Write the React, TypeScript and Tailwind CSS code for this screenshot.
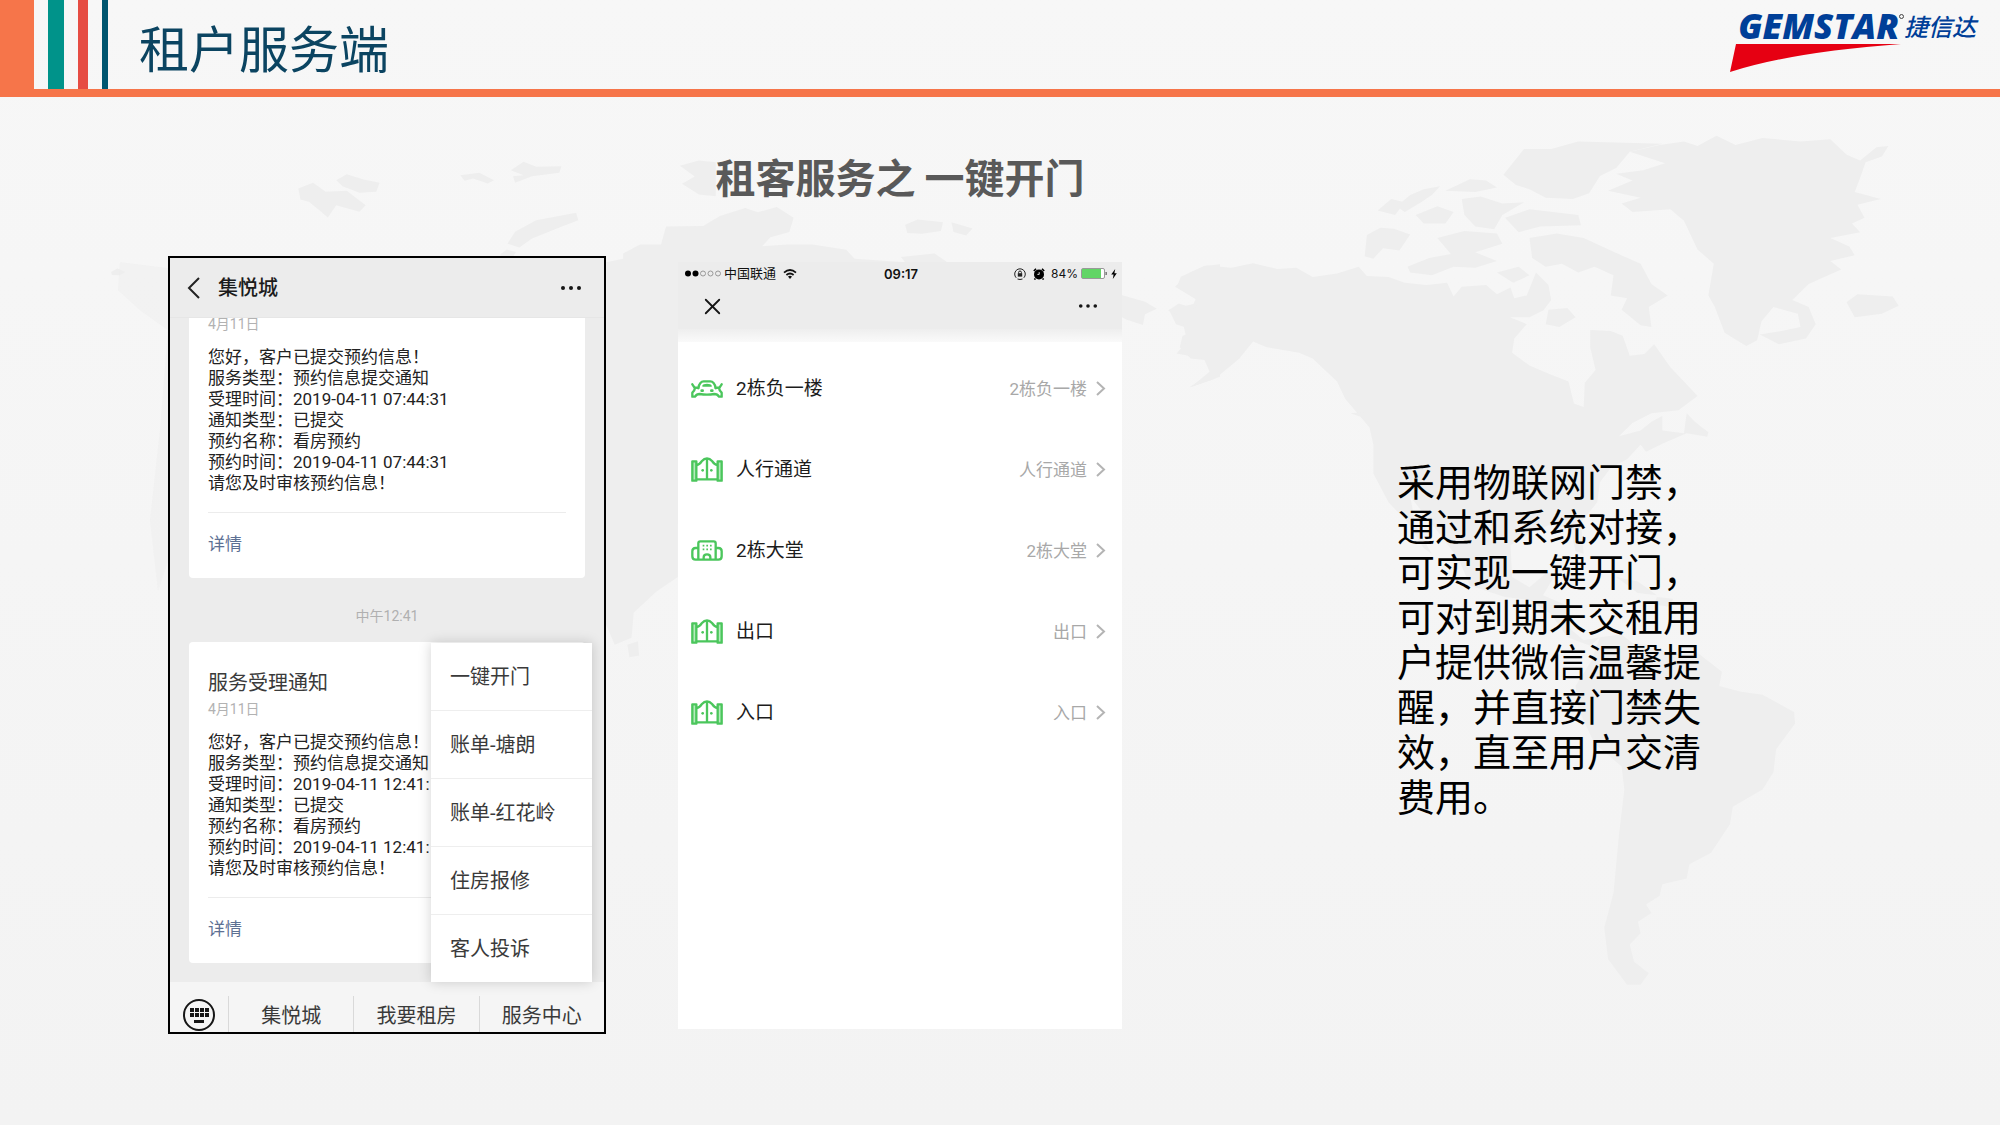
import React from "react";
import { X } from "lucide-react";

type IconName = "car" | "gate" | "building";

const messageLines = (time: string) => [
  "您好，客户已提交预约信息！",
  "服务类型：预约信息提交通知",
  `受理时间：2019-04-11 ${time}`,
  "通知类型：已提交",
  "预约名称：看房预约",
  `预约时间：2019-04-11 ${time}`,
  "请您及时审核预约信息！",
];

const menuItems = ["一键开门", "账单-塘朗", "账单-红花岭", "住房报修", "客人投诉"];
const tabs = ["集悦城", "我要租房", "服务中心"];

const doors: { name: string; icon: IconName }[] = [
  { name: "2栋负一楼", icon: "car" },
  { name: "人行通道", icon: "gate" },
  { name: "2栋大堂", icon: "building" },
  { name: "出口", icon: "gate" },
  { name: "入口", icon: "gate" },
];

function WorldMap() {
  return (
    <svg
      className="pointer-events-none absolute inset-0 h-full w-full"
      viewBox="0 0 2000 1125"
      preserveAspectRatio="none"
      fill="#eeeeee"
      aria-hidden="true"
    >
      {/* Americas and Greenland */}
      <g transform="translate(1150 100) scale(0.5421 0.574)">
        <path d="M46 325 L75 300 L105 288 L150 292 L190 284 L235 294 L270 292 L300 308 L345 302 L385 290 L400 306 L440 308 L470 318 L510 322 L548 318 L560 342 L575 325 L620 322 L640 338 L665 326 L672 345 L695 340 L712 300 L735 322 L740 348 L726 366 L700 378 L664 378 L695 390 L672 415 L668 440 L700 462 L740 478 L772 490 L782 528 L800 534 L802 492 L822 470 L812 430 L812 400 L850 402 L872 410 L885 445 L912 442 L930 425 L960 465 L985 490 L1010 515 L975 540 L925 545 L890 562 L865 585 L905 575 L925 560 L945 550 L945 575 L985 580 L990 545 L1005 560 L1030 578 L1028 586 L990 580 L950 596 L915 612 L905 600 L880 625 L850 640 L830 665 L825 700 L795 735 L800 790 L785 785 L775 745 L735 740 L700 755 L665 775 L668 830 L700 848 L735 820 L745 830 L725 862 L770 880 L775 920 L800 940 L830 935 L812 950 L770 935 L740 895 L700 870 L655 865 L590 845 L570 800 L530 750 L480 690 L490 740 L520 790 L505 780 L475 735 L440 700 L412 650 L412 600 L405 570 L360 520 L345 490 L300 450 L275 440 L215 430 L190 420 L165 450 L120 485 L75 500 L120 465 L130 455 L75 450 L55 430 L60 410 L85 402 L48 390 L35 365 L80 355 L85 345 Z" />
        <path d="M370 545 L400 555 L428 578 L420 560 L395 543 Z M860 830 L900 838 L935 862 L900 858 Z M935 865 L965 868 L958 882 L930 878 Z" />
        <path d="M830 935 L870 930 L890 945 L930 950 L960 965 L1010 962 L1055 995 L1050 1020 L1090 1030 L1130 1035 L1188 1065 L1190 1085 L1155 1130 L1150 1170 L1130 1200 L1075 1230 L1070 1260 L1035 1310 L995 1330 L990 1355 L945 1365 L940 1385 L915 1400 L925 1415 L900 1430 L905 1450 L885 1470 L893 1500 L920 1520 L905 1540 L880 1540 L845 1495 L838 1440 L855 1380 L865 1280 L875 1200 L870 1160 L820 1120 L790 1060 L785 1020 L815 975 Z" />
        {/* Arctic archipelago */}
        <path d="M455 185 L480 165 L505 155 L535 150 L520 165 L500 178 L470 195 Z M545 158 L590 138 L620 140 L640 152 L600 160 Z M420 192 L445 172 L470 178 L452 200 Z M400 235 L425 222 L450 224 L480 234 L460 262 L430 258 L412 276 L396 272 Z M490 200 L530 185 L560 195 L545 215 L505 215 Z M575 172 L610 168 L650 180 L690 178 L650 200 L635 225 L600 220 L580 200 Z M530 240 L580 228 L640 232 L650 250 L600 265 L640 280 L600 292 L560 290 L520 305 L480 300 L475 290 L515 275 L555 268 Z M655 205 L700 190 L790 200 L795 218 L720 220 L680 230 Z M652 130 L690 85 L740 85 L790 72 L945 76 L885 90 L860 118 L830 132 L810 162 L780 172 L730 170 L700 155 L675 148 Z M700 240 L750 232 L800 240 L850 262 L905 285 L925 320 L955 340 L920 360 L925 395 L905 392 L870 365 L880 345 L850 340 L855 305 L820 290 L790 300 L760 285 L730 290 L705 275 Z M640 300 L680 290 L700 305 L670 318 Z M735 365 L770 362 L785 378 L755 395 L730 390 Z" />
        <path d="M885 90 L940 78 L985 72 L1010 80 L1045 62 L1080 78 L1130 66 L1200 72 L1255 68 L1285 95 L1310 105 L1340 82 L1362 80 L1350 98 L1320 108 L1310 135 L1300 160 L1348 172 L1305 182 L1318 205 L1295 215 L1310 230 L1255 240 L1290 255 L1300 270 L1255 280 L1275 295 L1215 320 L1185 348 L1215 360 L1228 390 L1210 415 L1160 425 L1125 408 L1165 402 L1200 395 L1195 372 L1150 360 L1128 385 L1120 418 L1100 428 L1060 405 L1042 360 L1030 340 L1040 285 L1010 260 L985 210 L960 190 L890 195 L870 180 L905 170 L845 158 L890 140 L860 128 L910 122 L950 110 Z" />
        <path d="M1285 352 L1305 338 L1370 342 L1381 358 L1350 372 L1300 378 Z" />
      </g>
      {/* Islands over the north-west */}
      <g transform="translate(90 160) scale(0.4209 0.3333)">
        <path d="M495 85 L530 68 L560 95 L610 92 L655 135 L640 155 L585 135 L565 172 L545 150 L520 125 L500 118 Z M585 60 L610 42 L650 58 L688 68 L680 95 L640 98 L600 78 Z M880 45 L925 38 L960 60 L945 70 L910 55 L890 62 Z M1000 30 L1030 5 L1060 20 L1120 18 L1115 38 L1050 48 L1010 68 L1005 48 L1030 45 Z M1155 158 L1160 180 L1120 200 L1050 235 L1020 262 L992 250 L1010 215 L1060 180 Z M50 335 L65 325 L84 335 L70 345 L52 344 Z M975 282 L990 268 L1012 275 L1005 290 L975 290 Z" />
      </g>
      {/* Northern Eurasia around the device screens */}
      <g transform="translate(560 130) scale(0.4209 0.3571)">
        <path d="M110 370 L150 360 L150 345 L190 320 L240 320 L252 270 L340 268 L380 240 L440 218 L470 230 L515 215 L555 245 L545 285 L500 300 L480 325 L540 320 L600 320 L680 335 L700 360 L820 370 L810 355 L890 345 L920 370 L920 420 L1330 460 L1390 480 L1418 500 L1390 515 L1385 545 L1345 530 L1330 520 L1335 1100 L280 1100 L280 1250 L230 1290 L175 1350 L170 1420 L130 1440 L108 1380 Z" />
        <path d="M820 265 L850 250 L910 258 L905 282 L860 290 L825 288 Z M930 258 L980 275 L965 295 L935 285 Z M285 100 L330 85 L370 90 L370 185 L330 180 L290 150 L320 130 Z M160 1440 L185 1430 L188 1470 L165 1475 Z M1445 505 L1470 485 L1510 500 L1480 522 Z M1568 375 L1530 380 L1475 410 L1465 440 L1520 480 L1480 540 L1490 590 L1465 625 L1530 640 L1545 680 L1495 720 L1568 690 Z" />
      </g>
      {/* Coast left of the first screen */}
      <path d="M120 262 L168 268 L168 560 L158 590 L150 520 L160 430 L168 330 L140 310 L118 290 Z" opacity="0.5" />
    </svg>
  );
}

function Logo() {
  return (
    <div className="mr-6 mt-2 flex flex-col" role="img" aria-label="GEMSTAR 捷信达">
      <div className="flex h-9 items-center pl-2 text-[#003f98]">
        <span className="font-['Open_Sans','Liberation_Sans',sans-serif] text-[35px] font-extrabold italic leading-9">
          GEMSTAR
        </span>
        <span className="mb-5 h-[5px] w-[5px] rounded-full border border-[#444]" />
        <span className="font-['Noto_Sans_CJK_SC',sans-serif] text-[24px] font-medium italic leading-9">捷信达</span>
      </div>
      <svg className="h-[29px] w-[172px]" viewBox="0 0 172 29" aria-hidden="true">
        <path d="M6 0 L171 0 Q62 8 0 28 Z" fill="#e60012" />
      </svg>
    </div>
  );
}

function PageHeader() {
  return (
    <header className="relative flex h-[97px] border-b-8 border-[#f6754a]">
      <div className="flex" aria-hidden="true">
        <div className="w-[34px] bg-[#f6754a]" />
        <div className="ml-[14px] w-4 bg-[#00938a]" />
        <div className="ml-[14px] w-[10px] bg-[#e64c43]" />
        <div className="ml-[14px] w-[6px] bg-[#005670]" />
      </div>
      <h1 className="ml-[31px] flex-1 pt-[14px] text-[50px] leading-[64px] text-[#0b4461]">租户服务端</h1>
      <Logo />
    </header>
  );
}

function Dots({ className }: { className: string }) {
  return (
    <svg className={className} viewBox="0 0 22 6" fill="#161616" aria-hidden="true">
      <circle cx="3" cy="3" r="2" />
      <circle cx="11" cy="3" r="2" />
      <circle cx="19" cy="3" r="2" />
    </svg>
  );
}

function MessageBody({ time }: { time: string }) {
  return (
    <>
      <div className="mt-[17px] text-[17px] leading-[21px] text-[#222]">
        {messageLines(time).map((line) => (
          <p key={line} className="whitespace-nowrap">
            {line}
          </p>
        ))}
      </div>
      <div className="mt-[18px] border-t border-[#ececec] pb-6 pt-[21px]">
        <a href="#detail" className="block text-[17px] leading-5 text-[#5d7093]">
          详情
        </a>
      </div>
    </>
  );
}

function KeyboardIcon() {
  return (
    <svg className="h-[34px] w-[34px]" viewBox="0 0 34 34" fill="#161616" aria-hidden="true">
      <circle cx="17" cy="17" r="15" fill="none" stroke="#161616" strokeWidth="2" />
      {[8, 13, 18, 23].map((x) => (
        <g key={x}>
          <rect x={x} y="10" width="4" height="4" />
          <rect x={x} y="15" width="4" height="4" />
        </g>
      ))}
      <rect x="12" y="22" width="10" height="3" />
    </svg>
  );
}

function ChatScreen() {
  return (
    <section className="relative col-start-2 row-start-2 border-2 border-black bg-[#ececec] font-[Roboto,'Noto_Sans_CJK_SC',sans-serif]">
      <header className="flex h-[60px] items-center border-b border-[#e6e6e6] pl-[17px] pr-[22px]">
        <button type="button" aria-label="返回">
          <svg className="h-[22px] w-[13px]" viewBox="0 0 13 22" fill="none" stroke="#222" strokeWidth="2" aria-hidden="true">
            <path d="M12 1 L2 11 L12 21" />
          </svg>
        </button>
        <h3 className="ml-[18px] flex-1 pt-px text-[20px] font-medium leading-6 text-[#1c1c1c]">集悦城</h3>
        <button type="button" aria-label="更多">
          <Dots className="h-[6px] w-[22px]" />
        </button>
      </header>

      <div className="px-[19px] pb-[19px]">
        <article className="rounded-b-[4px] bg-white px-[19px]">
          <p className="text-[14px] leading-3 text-[#b2b2b2]">4月11日</p>
          <MessageBody time="07:44:31" />
        </article>
        <p className="flex h-16 items-center justify-center pt-3 text-[14px] text-[#b0b0b0]">中午12:41</p>
        <article className="overflow-hidden rounded-[4px] bg-white px-[19px] pt-[29px]">
          <h4 className="text-[20px] leading-6 text-[#3a3a3a]">服务受理通知</h4>
          <p className="mt-2 text-[14px] leading-3 text-[#b2b2b2]">4月11日</p>
          <MessageBody time="12:41:" />
        </article>
      </div>

      <nav className="relative flex h-[50px] bg-[#f5f5f5] text-[20px] text-[#3a3a3a]">
        <button type="button" aria-label="键盘" className="flex w-[58px] justify-center pt-4">
          <KeyboardIcon />
        </button>
        {tabs.map((tab) => (
          <button key={tab} type="button" className="mt-[14px] flex flex-1 items-center justify-center border-l border-[#d9d9d9] pt-1">
            {tab}
          </button>
        ))}
        <ul className="absolute bottom-full right-3 w-[161px] divide-y divide-[#eeeeee] bg-white shadow-[0_0_12px_rgba(0,0,0,0.18)]">
          {menuItems.map((item) => (
            <li key={item}>
              <button type="button" className="flex h-[67px] w-full items-center pl-[19px] pt-px text-left">
                {item}
              </button>
            </li>
          ))}
        </ul>
      </nav>
    </section>
  );
}

function DoorIcon({ name }: { name: IconName }) {
  if (name === "car") {
    return (
      <svg className="h-[18px] w-8" viewBox="0 0 96 54" fill="none" stroke="#4bc65c" strokeWidth="7" strokeLinejoin="round" strokeLinecap="round" aria-hidden="true">
        <path d="M22 24 Q26 4 38 4 H58 Q70 4 74 24" />
        <path d="M36 18 Q38 14 48 14 Q58 14 60 18 Z" strokeWidth="5" />
        <path d="M4 13 L10 22 L22 24 M74 24 L86 22 L92 13" />
        <path d="M12 24 Q11 32 4 38 V50 H12 Q17 42 26 42 Q48 46 70 42 Q79 42 84 50 H92 V38 Q85 32 84 24" />
        <path d="M32 32 H35 M61 32 H64" strokeWidth="8" />
      </svg>
    );
  }
  if (name === "gate") {
    return (
      <svg className="h-[25px] w-8" viewBox="0 0 96 75" fill="none" stroke="#4bc65c" strokeWidth="7" strokeLinejoin="round" aria-hidden="true">
        <path d="M4 13 H16 V71 H4 Z M80 13 H92 V71 H80 Z" fill="#b5eabc" />
        <path d="M16 24 Q27 22 32 13 Q40 4 48 4 Q56 4 64 13 Q69 22 80 24" />
        <path d="M48 4 V67 M16 67 H80" />
        <circle cx="35" cy="40" r="4" fill="#4bc65c" stroke="none" />
        <circle cx="61" cy="40" r="4" fill="#4bc65c" stroke="none" />
      </svg>
    );
  }
  return (
    <svg className="h-[21px] w-8" viewBox="0 0 96 63" fill="none" stroke="#4bc65c" strokeWidth="7" strokeLinejoin="round" aria-hidden="true">
      <path d="M22 58 V10 Q22 4 28 4 H68 Q74 4 74 10 V58" />
      <path d="M22 24 H14 Q4 24 4 34 V49 Q4 59 14 59 H82 Q92 59 92 49 V34 Q92 24 82 24 H74" />
      <path d="M38 58 V52 Q38 43 48 43 Q58 43 58 52 V58" />
      <path d="M35 17 H40 M46 17 H51 M57 17 H62 M35 28 H40 M46 28 H51 M57 28 H62" strokeWidth="5" />
    </svg>
  );
}

function StatusBar() {
  return (
    <div className="grid h-[23px] grid-cols-3 items-center pl-[7px] pr-[5px] text-[13px] leading-4 text-[#111]">
      <div className="flex items-center">
        <svg className="h-[7px] w-9" viewBox="0 0 36 7" fill="none" stroke="#999" aria-hidden="true">
          <circle cx="3" cy="3.5" r="3" fill="#000" stroke="none" />
          <circle cx="10.5" cy="3.5" r="3" fill="#000" stroke="none" />
          <circle cx="18" cy="3.5" r="2.5" />
          <circle cx="25.5" cy="3.5" r="2.5" />
          <circle cx="33" cy="3.5" r="2.5" />
        </svg>
        <span className="ml-[3px]">中国联通</span>
        <svg className="ml-[7px] h-[10px] w-[14px]" viewBox="0 0 14 10" fill="none" stroke="#111" strokeWidth="1.8" aria-hidden="true">
          <path d="M1 3.6 Q7 -1.6 13 3.6" />
          <path d="M3.4 6 Q7 3 10.6 6" />
          <path d="M5 7.6 Q7 6 9 7.6 L7 10 Z" fill="#111" stroke="none" />
        </svg>
      </div>
      <span className="text-center font-[Inter,sans-serif] font-semibold">09:17</span>
      <div className="flex items-center justify-end">
        <svg className="h-3 w-3" viewBox="0 0 12 12" fill="none" stroke="#222" aria-hidden="true">
          <path d="M2.2 9.8 A5.3 5.3 0 1 1 9.8 9.8 M3.5 11 Q6 12 8.5 11" />
          <path d="M4.6 5.5 V4.4 Q4.6 3 6 3 Q7.4 3 7.4 4.4 V5.5" />
          <rect x="3.8" y="5.2" width="4.4" height="3.4" fill="#222" stroke="none" />
        </svg>
        <svg className="ml-[7px] h-3 w-3" viewBox="0 0 12 12" aria-hidden="true">
          <circle cx="6" cy="6.4" r="5" fill="#000" />
          <path d="M0.8 3 L3 0.8 M11.2 3 L9 0.8 M2.4 10.4 L1.4 11.6 M9.6 10.4 L10.6 11.6" stroke="#000" strokeWidth="1.6" />
          <path d="M6.2 4.2 V6.4 H4.4" stroke="#ddd" fill="none" />
        </svg>
        <span className="ml-[6px] font-[Inter,sans-serif] text-[12px]">84%</span>
        <svg className="ml-[3px] h-[11px] w-[26px]" viewBox="0 0 26 11" aria-hidden="true">
          <rect x="0.5" y="0.5" width="23" height="10" rx="1.5" fill="#fff" stroke="#999" />
          <rect x="1" y="1" width="19" height="9" fill="#62d566" />
          <path d="M25 4 Q26.4 5.5 25 7 Z" fill="#777" stroke="#777" />
        </svg>
        <svg className="ml-1 h-[10px] w-[6px]" viewBox="0 0 6 10" fill="#000" aria-hidden="true">
          <path d="M4.2 0 L0.2 5.6 H2.6 L1.8 10 L5.8 4.2 H3.4 Z" />
        </svg>
      </div>
    </div>
  );
}

function DoorScreen() {
  return (
    <section className="col-start-4 row-start-2 mb-[5px] mt-[6px] bg-white font-[Roboto,'Noto_Sans_CJK_SC',sans-serif]">
      <header className="h-[67px] bg-[#ececec]">
        <StatusBar />
        <div className="flex h-[42px] items-center justify-between pl-[21px] pr-6">
          <button type="button" aria-label="关闭">
            <X className="h-[27px] w-[27px]" color="#161616" strokeWidth={1.6} />
          </button>
          <button type="button" aria-label="更多">
            <Dots className="h-[6px] w-5" />
          </button>
        </div>
      </header>
      <div className="h-[13px] bg-linear-to-b from-[#eeeeee] to-[#fafafa]" aria-hidden="true" />
      <ul className="pt-[6px]">
        {doors.map((door) => (
          <li key={door.name}>
            <button type="button" className="flex h-[81px] w-full items-center pl-[13px] pr-4 text-left">
              <DoorIcon name={door.icon} />
              <span className="ml-[13px] flex-1 text-[19px] leading-6 text-[#1c1c1c]">{door.name}</span>
              <span className="text-[17px] leading-6 text-[#a8a8a8]">{door.name}</span>
              <svg className="ml-[9px] h-[15px] w-[10px]" viewBox="0 0 10 15" fill="none" stroke="#b4b4b4" strokeWidth="2" aria-hidden="true">
                <path d="M1 1 L8 7.5 L1 14" />
              </svg>
            </button>
          </li>
        ))}
      </ul>
    </section>
  );
}

export default function App() {
  return (
    <div className="relative min-h-screen bg-linear-to-b from-[#f7f7f7] to-[#f3f3f3] font-['Noto_Sans_CJK_SC',sans-serif]">
      <WorldMap />
      <PageHeader />
      <main className="relative grid grid-cols-[168fr_438fr_72fr_444fr_275fr_308fr_295fr] grid-rows-[159px_auto] pb-[92px]">
        <h2 className="col-start-4 row-start-1 justify-self-center whitespace-nowrap pt-[51px] text-[40px] font-bold leading-[56px] text-[#595959]">
          租客服务之 一键开门
        </h2>
        <ChatScreen />
        <DoorScreen />
        <p className="col-start-6 row-start-2 mt-[201px] text-[38px] leading-[45px] text-black">
          采用物联网门禁，通过和系统对接，可实现一键开门，可对到期未交租用户提供微信温馨提醒，并直接门禁失效，直至用户交清费用。
        </p>
      </main>
    </div>
  );
}
